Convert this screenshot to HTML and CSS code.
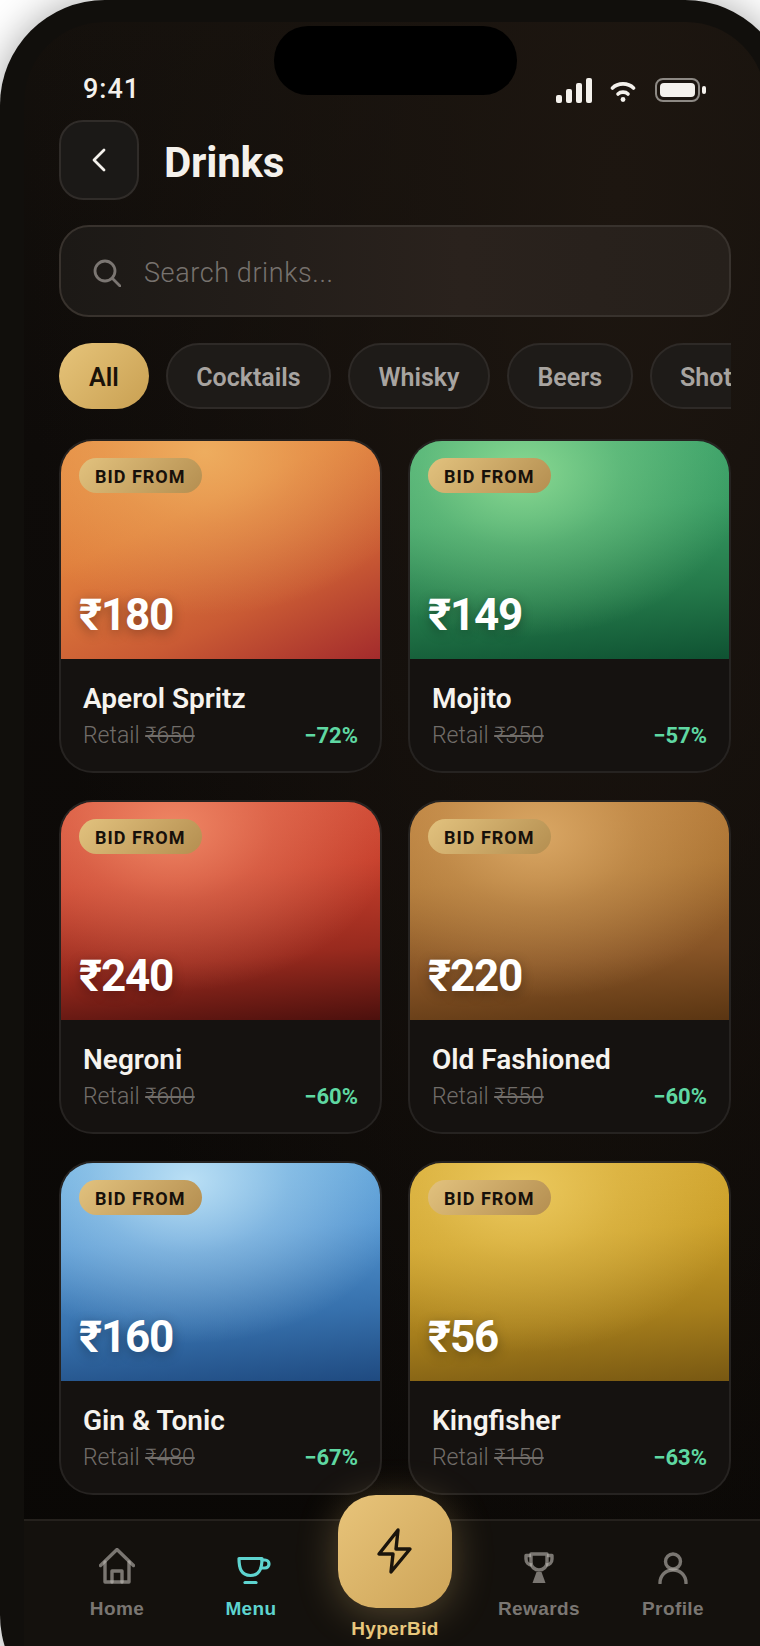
FILE: index.html
```html
<!DOCTYPE html>
<html lang="en">

<head>
    <meta charset="UTF-8">
    <meta name="viewport" content="width=device-width, initial-scale=1">
    <title>Drinks</title>
    <link rel="stylesheet" href="styles.css">
</head>

<body>
    <div class="phone">
        <div class="screen">
            <div class="island"></div>

            <div class="status">
                <span class="time">9:41</span>
                <div class="status-icons">
                    <div class="signal"><i></i><i></i><i></i><i></i></div>
                    <svg class="wifi" width="26" height="21" viewBox="0 0 26 21" fill="none" stroke="#f4f1ec" stroke-width="3.600" stroke-linecap="round">
                        <path d="M2.500 7C8 1.500 18 1.500 23.500 7" />
                        <path d="M8 13C10.500 10.500 15.500 10.500 18 13" />
                        <circle cx="13" cy="18.500" r="2.400" fill="#f4f1ec" stroke="none" />
                    </svg>
                    <div class="battery"><i></i></div>
                    <div class="battery-nub"></div>
                </div>
            </div>

            <div class="header">
                <div class="back">
                    <svg width="16" height="26" viewBox="0 0 16 26" fill="none" stroke="#f4f1ec" stroke-width="2.800" stroke-linecap="round" stroke-linejoin="round">
                        <path d="M13 3L3 13L13 23" />
                    </svg>
                </div>
                <h1>Drinks</h1>
            </div>

            <div class="search">
                <svg width="28" height="28" viewBox="0 0 28 28" fill="none" stroke="#7b7672" stroke-width="2.800" stroke-linecap="round">
                    <circle cx="12" cy="12" r="10" />
                    <path d="M19.500 19.500L27 27" />
                </svg>
                <span>Search drinks...</span>
            </div>

            <div class="chips">
                <div class="chip on">All</div>
                <div class="chip">Cocktails</div>
                <div class="chip">Whisky</div>
                <div class="chip">Beers</div>
                <div class="chip">Shots</div>
            </div>

            <div class="grid">
                <div class="card">
                    <div class="pic aperol"><span class="badge">BID FROM</span><span class="price">₹180</span></div>
                    <div class="info">
                        <div class="name">Aperol Spritz</div>
                        <div class="meta"><span class="retail">Retail <s>₹650</s></span><span class="off">−72%</span></div>
                    </div>
                </div>
                <div class="card">
                    <div class="pic mojito"><span class="badge">BID FROM</span><span class="price">₹149</span></div>
                    <div class="info">
                        <div class="name">Mojito</div>
                        <div class="meta"><span class="retail">Retail <s>₹350</s></span><span class="off">−57%</span></div>
                    </div>
                </div>
                <div class="card">
                    <div class="pic negroni"><span class="badge">BID FROM</span><span class="price">₹240</span></div>
                    <div class="info">
                        <div class="name">Negroni</div>
                        <div class="meta"><span class="retail">Retail <s>₹600</s></span><span class="off">−60%</span></div>
                    </div>
                </div>
                <div class="card">
                    <div class="pic fashioned"><span class="badge">BID FROM</span><span class="price">₹220</span></div>
                    <div class="info">
                        <div class="name">Old Fashioned</div>
                        <div class="meta"><span class="retail">Retail <s>₹550</s></span><span class="off">−60%</span></div>
                    </div>
                </div>
                <div class="card">
                    <div class="pic gin"><span class="badge">BID FROM</span><span class="price">₹160</span></div>
                    <div class="info">
                        <div class="name">Gin &amp; Tonic</div>
                        <div class="meta"><span class="retail">Retail <s>₹480</s></span><span class="off">−67%</span></div>
                    </div>
                </div>
                <div class="card">
                    <div class="pic kingfisher"><span class="badge">BID FROM</span><span class="price">₹56</span></div>
                    <div class="info">
                        <div class="name">Kingfisher</div>
                        <div class="meta"><span class="retail">Retail <s>₹150</s></span><span class="off">−63%</span></div>
                    </div>
                </div>
            </div>

            <div class="nav">
                <div class="tab home">
                    <svg width="36" height="36" viewBox="0 0 36 36" fill="none" stroke="rgba(190,186,180,.6)" stroke-width="3.400" stroke-linecap="round" stroke-linejoin="round">
                        <path d="M1.500 17.500L18 1.500L34.500 17.500" />
                        <path d="M6 14V34H30V14" />
                        <path d="M13 34V23H23V34" />
                    </svg>
                    <span>Home</span>
                </div>
                <div class="tab menu">
                    <svg width="34" height="28" viewBox="0 0 34 28" fill="none" stroke="#5ed4cf" stroke-width="3.200" stroke-linecap="round" stroke-linejoin="round">
                        <path d="M2 2.500H25C25 12 23 19.500 13.500 19.500C4 19.500 2 12 2 2.500Z" />
                        <path d="M25 4H28A4 4 0 0 1 28 12H24" />
                        <path d="M8 26.500H19" />
                    </svg>
                    <span>Menu</span>
                </div>
                <div class="tab bid">
                    <div class="fab">
                        <svg width="40" height="50" viewBox="0 0 40 50" fill="none" stroke="#1a140c" stroke-width="3.400" stroke-linecap="round" stroke-linejoin="round">
                            <path d="M23 3L4 27H18L16 45L35 22H21Z" />
                        </svg>
                    </div>
                    <span>HyperBid</span>
                </div>
                <div class="tab rewards">
                    <svg width="30" height="32" viewBox="0 0 30 32" fill="none" stroke="rgba(190,186,180,.6)" stroke-width="3.400" stroke-linejoin="round">
                        <path d="M7 2H23V10C23 15 19 18 15 18C11 18 7 15 7 10Z" />
                        <path d="M7 3.500H2V7C2 10.500 4.500 13 8 13" />
                        <path d="M23 3.500H28V7C28 10.500 25.500 13 22 13" />
                        <path d="M8.500 31H21.500L17.500 20H12.500Z" fill="rgba(190,186,180,.6)" stroke="none" />
                    </svg>
                    <span>Rewards</span>
                </div>
                <div class="tab profile">
                    <svg width="30" height="32" viewBox="0 0 30 32" fill="none" stroke="rgba(190,186,180,.6)" stroke-width="3.400" stroke-linecap="round">
                        <circle cx="15" cy="9.500" r="7.500" />
                        <path d="M2 31C2 23 8 18 15 18C22 18 28 23 28 31" />
                    </svg>
                    <span>Profile</span>
                </div>
            </div>
        </div>
    </div>
</body>

</html>
```

FILE: styles.css
```css
html,
body {
    margin: 0;
    height: 100%;
    overflow: hidden;
    background: #fff;
}

body {
    font-family: Roboto, "Liberation Sans", sans-serif;
    color: #f4f1ec;
}

.phone {
    width: 790px;
    height: 1720px;
    box-sizing: border-box;
    padding: 22px 24px 0;
    background: #110f0c;
    border-radius: 105px;
    box-shadow: 0 0 40px rgba(0, 0, 0, .35);
}

.screen {
    position: relative;
    height: 100%;
    display: flex;
    flex-direction: column;
    border-radius: 80px 80px 0 0;
    background:
        radial-gradient(ellipse at 80% 10%, #1d1610 0%, rgba(29, 22, 16, 0) 70%),
        linear-gradient(180deg, #14100c 0%, #0e0b09 25%, #090705 100%);
}

.island {
    position: absolute;
    top: 4px;
    left: 250px;
    width: 243px;
    height: 69px;
    border-radius: 34px;
    background: #000;
}

.status {
    height: 98px;
    box-sizing: border-box;
    padding: 52px 59px 0 59px;
    display: flex;
    justify-content: space-between;
}

.time {
    font-size: 27px;
    font-weight: 500;
    letter-spacing: 1px;
    line-height: 30px;
}

.status-icons {
    display: flex;
    align-items: flex-start;
    margin-top: 4px;
    margin-right: 1px;
}

.signal {
    display: flex;
    align-items: flex-end;
    gap: 4px;
    height: 25px;
    margin-right: 18px;
}

.signal i {
    display: block;
    width: 6px;
    border-radius: 2px;
    background: #f4f1ec;
}

.signal i:nth-child(1) { height: 8px; }
.signal i:nth-child(2) { height: 14px; }
.signal i:nth-child(3) { height: 20px; }
.signal i:nth-child(4) { height: 25px; }

.wifi {
    margin: 3px 19px 0 0;
}

.battery {
    width: 45px;
    height: 24px;
    box-sizing: border-box;
    padding: 3px;
    border: 2px solid #8d8984;
    border-radius: 8px;
}

.battery i {
    display: block;
    height: 100%;
    border-radius: 4px;
    background: #f4f1ec;
}

.battery-nub {
    width: 4px;
    height: 8px;
    margin: 8px 0 0 2px;
    border-radius: 2px;
    background: #f4f1ec;
}

.header {
    display: flex;
    align-items: center;
    gap: 25px;
    padding: 0 35px;
}

.back {
    width: 80px;
    height: 80px;
    box-sizing: border-box;
    display: flex;
    align-items: center;
    justify-content: center;
    border: 2px solid #302c29;
    border-radius: 24px;
    background: #1b1917;
}

h1 {
    margin: 0;
    padding-top: 5px;
    font-size: 42px;
    font-weight: 700;
    letter-spacing: -.2px;
}

.search {
    height: 92px;
    box-sizing: border-box;
    margin: 25px 35px 0;
    padding: 4px 32px 0;
    display: flex;
    align-items: center;
    gap: 23px;
    border: 2px solid #38322d;
    border-radius: 30px;
    background: linear-gradient(90deg, #1c1916 0%, #2a221d 60%, #26201b 100%);
    font-size: 27px;
    font-weight: 300;
    letter-spacing: .6px;
    color: #77726e;
}

.chips {
    display: flex;
    gap: 17px;
    margin: 26px 35px 0;
    overflow: hidden;
}

.chip {
    height: 66px;
    box-sizing: border-box;
    flex: none;
    padding: 3px 28.500px 0;
    display: flex;
    align-items: center;
    border: 2px solid #2e2a27;
    border-radius: 33px;
    background: #1e1b18;
    font-size: 25px;
    font-weight: 600;
    color: #a8a4a0;
}

.chip.on {
    border: 0;
    padding: 3px 30px 0;
    background: linear-gradient(135deg, #e6c47a 0%, #c9a052 100%);
    color: #1a1208;
}

.grid {
    display: grid;
    grid-template-columns: 323px 323px;
    gap: 27px 26px;
    margin: 30px 35px 0;
}

.card {
    height: 334px;
    box-sizing: border-box;
    overflow: hidden;
    border: 2px solid #262321;
    border-radius: 34px;
    background: #151210;
}

.pic {
    height: 218px;
    box-sizing: border-box;
    padding: 17px 18px;
    display: flex;
    flex-direction: column;
    justify-content: space-between;
    align-items: flex-start;
}

.badge {
    height: 35px;
    box-sizing: border-box;
    padding: 2px 16px 0;
    display: flex;
    align-items: center;
    border-radius: 18px;
    background: linear-gradient(135deg, #e2c27e 0%, #b48e50 100%);
    font-size: 18px;
    font-weight: 700;
    letter-spacing: 1px;
    color: #17100a;
}

.price {
    margin-bottom: 4px;
    font-size: 44px;
    line-height: 46px;
    font-weight: 700;
    letter-spacing: -1.200px;
    color: #fff;
    text-shadow: 0 3px 12px rgba(0, 0, 0, .35);
}

.aperol {
    background:
        radial-gradient(ellipse 70% 75% at 45% 5%, rgba(240, 180, 100, .85) 0%, rgba(240, 180, 100, .4) 45%, rgba(240, 180, 100, 0) 100%),
        linear-gradient(155deg, #e48a42 0%, #e07e3c 35%, #c95a34 70%, #a32b2c 100%);
}

.mojito {
    background:
        radial-gradient(ellipse 70% 75% at 35% 15%, rgba(145, 222, 150, .9) 0%, rgba(145, 222, 150, .4) 45%, rgba(145, 222, 150, 0) 100%),
        linear-gradient(175deg, #3fa56c 0%, #379a62 35%, #24794a 70%, #0f5232 100%);
}

.negroni {
    background:
        radial-gradient(ellipse 70% 75% at 35% 12%, rgba(242, 140, 105, .9) 0%, rgba(242, 140, 105, .4) 45%, rgba(242, 140, 105, 0) 100%),
        linear-gradient(175deg, #d4503a 0%, #c63f2c 35%, #982a1e 70%, #4c100d 100%);
}

.fashioned {
    background:
        radial-gradient(ellipse 70% 75% at 40% 15%, rgba(222, 172, 105, .9) 0%, rgba(222, 172, 105, .4) 45%, rgba(222, 172, 105, 0) 100%),
        linear-gradient(175deg, #b67a38 0%, #a87030 35%, #875426 70%, #5a3512 100%);
}

.gin {
    background:
        radial-gradient(ellipse 70% 75% at 40% 8%, rgba(196, 230, 248, .9) 0%, rgba(196, 230, 248, .4) 45%, rgba(196, 230, 248, 0) 100%),
        linear-gradient(175deg, #62a8dc 0%, #5294d0 35%, #3670ac 70%, #1f4a80 100%);
}

.kingfisher {
    background:
        radial-gradient(ellipse 70% 75% at 35% 12%, rgba(238, 204, 98, .9) 0%, rgba(238, 204, 98, .4) 45%, rgba(238, 204, 98, 0) 100%),
        linear-gradient(175deg, #d4a832 0%, #ca9e28 35%, #a67e1c 70%, #785812 100%);
}

.info {
    padding: 24px 22px 0;
}

.name {
    font-size: 28px;
    line-height: 32px;
    font-weight: 600;
    color: #f6f3ee;
}

.meta {
    display: flex;
    justify-content: space-between;
    align-items: center;
    margin-top: 6px;
    line-height: 30px;
}

.retail {
    font-size: 23px;
    font-weight: 300;
    color: #716d69;
}

.off {
    font-size: 22px;
    font-weight: 700;
    color: #5fd8a2;
}

.nav {
    display: flex;
    height: 140px;
    margin-top: 24px;
    box-sizing: border-box;
    border-top: 2px solid #25211d;
    background: #14110d;
    font-family: "Liberation Sans", sans-serif;
    font-size: 19px;
    font-weight: 700;
    letter-spacing: .4px;
}

.tab {
    position: relative;
    height: 99px;
    display: flex;
    flex-direction: column;
    align-items: center;
    justify-content: flex-end;
    gap: 14px;
    color: #7a7672;
}

.home { width: 134px; margin-left: 26px; }
.menu { width: 134px; color: #5ed4cf; }
.bid { width: 154px; color: #e8c77c; }
.rewards { width: 134px; }
.profile { width: 134px; }

.menu svg { margin-left: 6px; }

.bid {
    height: 119px;
    gap: 10px;
}

.fab {
    width: 114px;
    height: 113px;
    margin-top: -30px;
    display: flex;
    align-items: center;
    justify-content: center;
    border-radius: 38px;
    background: linear-gradient(135deg, #e8c47a 0%, #cda458 100%);
    box-shadow: 0 6px 40px rgba(232, 196, 122, .3);
}
```
